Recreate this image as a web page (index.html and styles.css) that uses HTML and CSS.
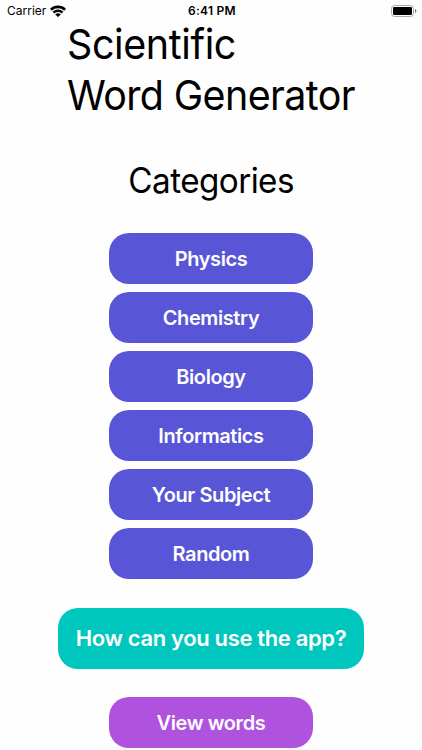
FILE: index.html
```html
<!DOCTYPE html>
<html lang="en">
<head>
<meta charset="utf-8">
<title>Scientific Word Generator</title>
<link rel="stylesheet" href="styles.css">
</head>
<body>
<header class="status">
  <div class="carrier"><span>Carrier</span>
    <svg class="wifi" viewBox="0 0 16 12" aria-hidden="true"><path d="M0 3.7a11.5 11.5 0 0 1 16 0L14.2 5.7a9 9 0 0 0-12.4 0ZM2.6 6.7a7.7 7.7 0 0 1 10.8 0l-1.8 1.9a5.1 5.1 0 0 0-7.2 0ZM5.2 9.5a3.9 3.9 0 0 1 5.6 0L8 12Z"/></svg>
  </div>
  <time>6:41 PM</time>
  <svg class="battery" viewBox="0 0 26 12" aria-hidden="true"><rect class="shell" x=".5" y=".5" width="22" height="11" rx="3"/><rect x="2" y="2" width="19" height="8" rx="1.3"/><path class="cap" d="M24 4q1.4.5 1.4 2T24 8Z"/></svg>
</header>
<main>
  <h1><span class="first">Scientific</span><br><span class="second">Word Generator</span></h1>
  <h2>Categories</h2>
  <nav class="categories">
    <button>Physics</button>
    <button>Chemistry</button>
    <button>Biology</button>
    <button>Informatics</button>
    <button>Your Subject</button>
    <button>Random</button>
  </nav>
  <button class="help">How can you use the app?</button>
  <button class="view">View words</button>
</main>
</body>
</html>
```
FILE: styles.css
```css
* { box-sizing: border-box; }
body { margin: 0; width: 422px; height: 750px; overflow: hidden; background: #fefefe; color: #000; font-family: Inter, sans-serif; }
.status { height: 20px; padding: 2px 5px 0 7px; display: grid; grid-template-columns: 1fr auto 1fr; align-items: center; font-size: 12px; line-height: 18px; }
.carrier { display: flex; align-items: center; gap: 4px; letter-spacing: 0; }
.wifi { width: 16px; height: 12px; }
.status time { font-weight: 600; letter-spacing: .25px; }
.battery { width: 26px; height: 12px; justify-self: end; }
.shell { fill: none; stroke: #aaa; }
.cap { fill: #777; }
main { display: flex; flex-direction: column; align-items: center; }
h1 { width: 289px; margin: -1px 0 0; font-size: 41.5px; line-height: 51px; font-weight: 400; white-space: nowrap; }
h1 span { display: inline-block; transform: scaleX(.95); transform-origin: left; }
.first { letter-spacing: -.4px; }
.second { letter-spacing: -.65px; }
h2 { margin: 38px 0 0; font-size: 35px; line-height: 43px; font-weight: 400; letter-spacing: -.6px; transform: scaleX(.95); }
button { display: block; border: 0; padding: 1px 0 0; width: 204px; height: 51px; border-radius: 20px; color: #fefefe; background: #5856d6; font: 600 20px/50px Inter, sans-serif; letter-spacing: -.4px; white-space: nowrap; }
.categories { display: flex; flex-direction: column; gap: 8.1px; margin-top: 30.7px; }
.help { width: 306px; height: 61px; margin-top: 28.5px; padding: 0; background: #00c7be; font-size: 22px; line-height: 60px; letter-spacing: -.35px; }
.view { margin-top: 28.5px; background: #af52de; }
```
